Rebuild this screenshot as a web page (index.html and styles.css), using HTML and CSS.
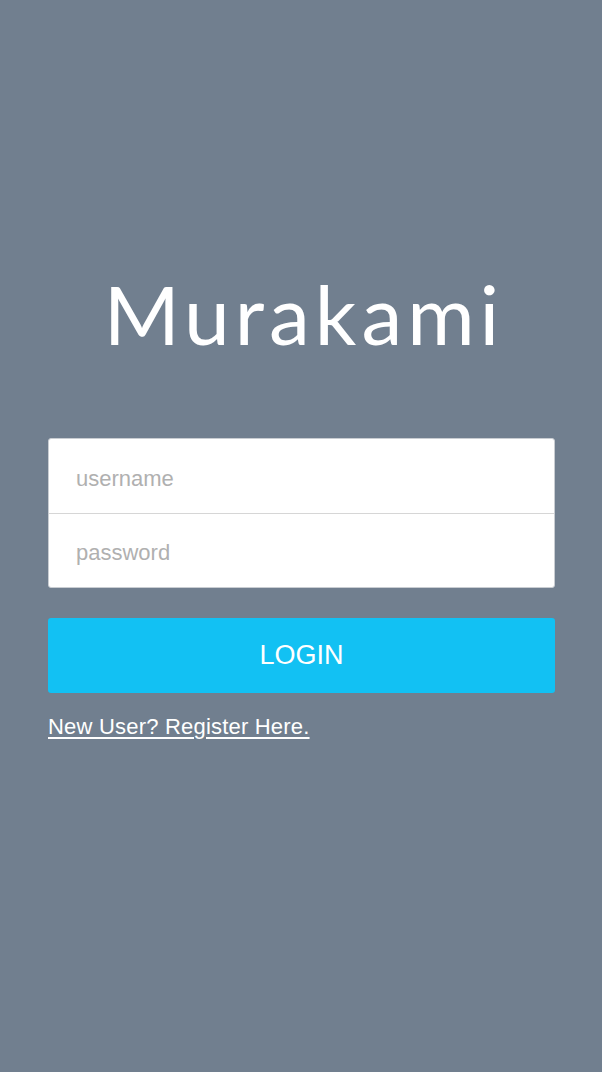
FILE: index.html
```html
<!DOCTYPE html>
<html>
<head>
<meta charset="utf-8">
<link rel="stylesheet" href="styles.css">
</head>
<body>
<main class="page">
  <h1 class="title">Murakami</h1>
  <form class="form">
    <div class="fields">
      <input class="field" type="text" placeholder="username">
      <input class="field" type="password" placeholder="password">
    </div>
    <button class="login" type="button">LOGIN</button>
    <a class="register" href="#">New User? Register Here.</a>
  </form>
</main>
</body>
</html>
```
FILE: styles.css
```css
html, body {
  margin: 0;
  padding: 0;
  background: #717f8f;
  height: 100%;
}
.page {
  display: flex;
  flex-direction: column;
  align-items: stretch;
  padding: 258px 47px 0 48px;
  box-sizing: border-box;
  height: 1072px;
}
.title {
  margin: 0;
  text-align: center;
  font-family: "Lato", sans-serif;
  font-weight: 400;
  font-size: 82px;
  line-height: 110px;
  height: 110px;
  color: #ffffff;
  letter-spacing: 5px;
  text-indent: 5px;
}
.form {
  display: flex;
  flex-direction: column;
  margin-top: 70px;
}
.fields {
  display: flex;
  flex-direction: column;
  background: #fff;
  border: 1px solid #c9cdd2;
  border-radius: 3px;
}
.field {
  border: none;
  outline: none;
  height: 74px;
  padding: 5px 0 0 27px;
  box-sizing: border-box;
  margin: 0;
  font-family: "Liberation Sans", Arial, sans-serif;
  font-size: 22px;
  color: #333;
  background: transparent;
}
.field + .field {
  border-top: 1px solid #d6d6d6;
}
.field::placeholder {
  color: #b0b0b0;
}
.login {
  margin-top: 30px;
  height: 75px;
  border: none;
  border-radius: 3px;
  background: #12c1f3;
  color: #fff;
  font-family: "Liberation Sans", Arial, sans-serif;
  font-size: 27px;
  padding: 0;
}
.register {
  margin-top: 21px;
  align-self: flex-start;
  color: #fff;
  font-family: "Liberation Sans", Arial, sans-serif;
  font-size: 22px;
  letter-spacing: 0.2px;
  text-decoration: underline;
  text-underline-offset: 3px;
}
```
